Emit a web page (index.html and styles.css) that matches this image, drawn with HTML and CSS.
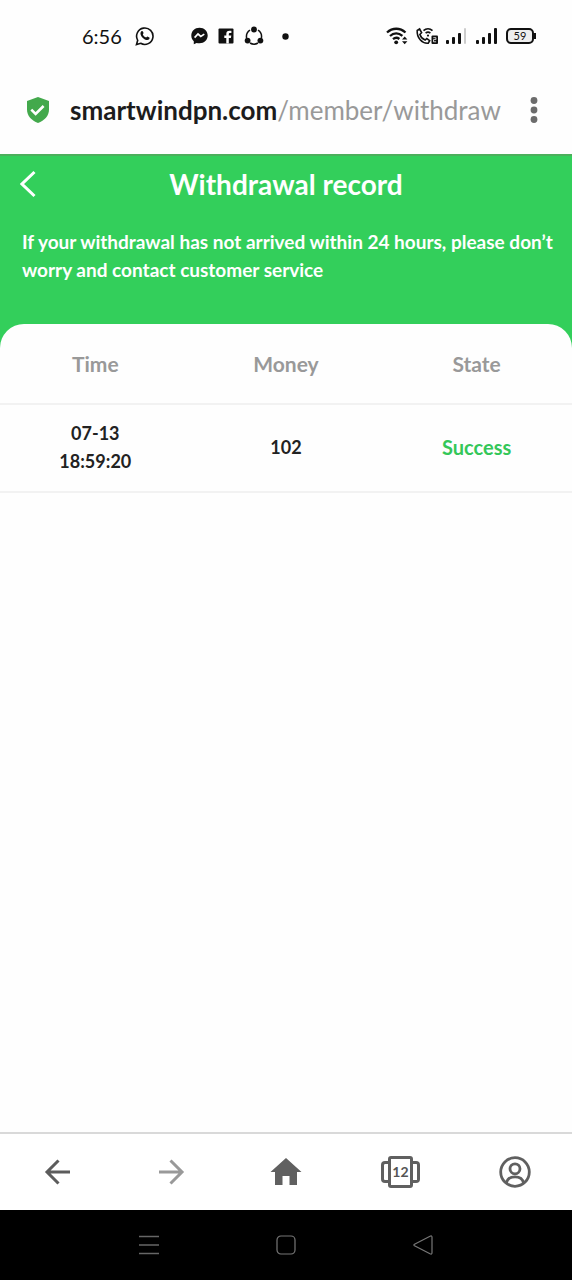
FILE: index.html
```html
<!DOCTYPE html>
<html lang="en">
<head>
<meta charset="utf-8">
<meta name="viewport" content="width=device-width, initial-scale=1">
<title>Withdrawal record</title>
<link rel="stylesheet" href="styles.css">
</head>
<body>
<div class="status">
  <div class="status-left">
    <time class="clock">6:56</time>
    <svg class="whatsapp" width="20" height="20" viewBox="0 0 20 20" fill="none" stroke="#111" stroke-width="1.6"><path d="M1.5 18.5l1.2-4.2a8.2 8.2 0 1 1 3 3z"/><path d="M6.2 5.4c.6-.7 1.400-.6 1.700.1l.7 1.600-.8 1.300c.7 1.500 1.800 2.500 3.300 3.200l1.300-1 1.900 1c.5.400.3 1.200-.2 1.700-1.400 1.300-3.600.6-5.600-.9-2.300-1.800-4.100-5-2.300-7z" fill="#111" stroke="none"/></svg>
    <svg width="17" height="18" viewBox="0 0 17 18"><path d="M8.500.8C3.800.8.300 4.100.300 8.600c0 2.400.9 4.300 2.500 5.600v3l2.800-1.300c.9.300 1.900.4 2.900.4 4.700 0 8.200-3.200 8.200-7.700S13.200.8 8.500.8z" fill="#111"/><path d="M3.600 10.600L7 7l2.800 2.400 3.500-2.300" fill="none" stroke="#fff" stroke-width="1.700"/></svg>
    <svg width="16" height="16" viewBox="0 0 16 16"><rect x=".5" y=".5" width="15" height="15" rx="1" fill="#111"/><path d="M10.800 15.500V9.900h2.100l.4-2.300h-2.500V6.200c0-.8.400-1.200 1.300-1.200h1.300V2.800h-1.900C9.300 2.800 8.300 4 8.300 6v1.600H6.300v2.300h2v5.600z" fill="#fff"/></svg>
    <svg width="20" height="20" viewBox="0 0 20 20" fill="none" stroke="#111" stroke-width="1.500"><path d="M6 4.200A7.600 7.600 0 0 0 2.600 12M14 4.200a7.600 7.600 0 0 1 3.400 7.800M6 17a8 8 0 0 0 8 0"/><g fill="#111" stroke="none"><circle cx="10" cy="3.500" r="2.900"/><circle cx="3.600" cy="14.600" r="2.900"/><circle cx="16.400" cy="14.600" r="2.900"/></g></svg>
    <svg class="dot" width="7" height="7" viewBox="0 0 7 7"><circle cx="3.500" cy="3.500" r="3.200" fill="#111"/></svg>
  </div>
  <div class="status-right">
    <svg width="22" height="18" viewBox="0 0 22 18" fill="none" stroke="#111" stroke-width="2.300"><path d="M1 5.500C6.500.5 14 .5 19.500 5.500M4 9c3.700-3.300 8.600-3.300 12.400-.2M7 12.200c2-1.700 4.500-1.700 6.400-.2"/><circle cx="10.200" cy="15.300" r="1.900" fill="#111" stroke="none"/><path d="M16 12.500l2.700-3 2.700 3zM16 14.200l2.700 3 2.700-3z" fill="#111" stroke="none"/></svg>
    <svg width="22" height="18" viewBox="0 0 22 18" fill="none" stroke="#111" stroke-width="1.600"><path d="M1.200 3.500L3.600 2l2 3.700-1.700 1.700c.9 2.700 2.700 4.600 5.200 5.600l1.700-1.500 2.900 2.200-1.500 2.500C6 16.800.7 10.500 1.200 3.500z"/><path d="M7.500 3.700c2.600-2.400 6.400-2.400 9 0M9.600 6.200c1.400-1.200 3.400-1.200 4.800 0"/><circle cx="12" cy="8.600" r="1.100" fill="#111" stroke="none"/><rect x="15.500" y="8.500" width="6.500" height="8.500" rx="1" fill="#111" stroke="none"/><path d="M17.300 10.700h2.600v1.900h-2.400v2.200h2.600" stroke="#fff" stroke-width=".8"/></svg>
    <svg width="22" height="18" viewBox="0 0 22 18" fill="#111"><rect x="0" y="13" width="3" height="4" rx="1"/><rect x="6" y="10" width="3" height="7" rx="1"/><rect x="12" y="6" width="3" height="11" rx="1"/><rect x="18" y="1" width="2" height="16" rx="1" fill="#ccc"/></svg>
    <svg width="22" height="18" viewBox="0 0 22 18" fill="#111"><rect x="0" y="13" width="3" height="4" rx="1"/><rect x="6" y="10" width="3" height="7" rx="1"/><rect x="12" y="6" width="3" height="11" rx="1"/><rect x="18" y="1" width="3" height="16" rx="1"/></svg>
    <div class="battery-group"><span class="battery">59</span><span class="battery-tip"></span></div>
  </div>
</div>
<div class="address">
  <svg class="shield" width="24" height="28" viewBox="0 0 24 28"><path d="M12 1l11 4v8.500c0 6.300-4.500 11-11 13.500C5.500 24.500 1 19.800 1 13.500V5z" fill="#43a94c"/><path d="M5.300 13.700l4.300 4.300 8-8" fill="none" stroke="#fff" stroke-width="2.600"/></svg>
  <div class="url"><strong>smartwindpn.com</strong>/member/withdraw</div>
  <button class="icon-button" aria-label="Menu"><svg width="8" height="28" viewBox="0 0 8 28" fill="#6c6c6c"><circle cx="4" cy="4.500" r="3.400"/><circle cx="4" cy="14" r="3.400"/><circle cx="4" cy="23.500" r="3.400"/></svg></button>
</div>
<header class="banner">
  <div class="title-row">
    <button class="icon-button" aria-label="Back"><svg width="18" height="28" viewBox="0 0 18 28" fill="none" stroke="#fff" stroke-width="3"><path d="M14.500 2L2 14l12.500 12"/></svg></button>
    <h1>Withdrawal record</h1>
  </div>
  <p>If your withdrawal has not arrived within 24 hours, please don’t worry and contact customer service</p>
</header>
<main class="sheet">
  <table>
    <thead><tr><th scope="col">Time</th><th scope="col">Money</th><th scope="col">State</th></tr></thead>
    <tbody><tr><td>07-13<br>18:59:20</td><td>102</td><td class="success">Success</td></tr></tbody>
  </table>
</main>
<nav class="toolbar" aria-label="Browser">
  <button class="icon-button" aria-label="Previous page"><svg width="28" height="28" viewBox="0 0 28 28" fill="none" stroke="#5c5c5c" stroke-width="3"><path d="M27 14H4M15.500 2.500L4 14l11.500 11.500"/></svg></button>
  <button class="icon-button" aria-label="Next page"><svg width="28" height="28" viewBox="0 0 28 28" fill="none" stroke="#999" stroke-width="3"><path d="M1 14h23M12.500 2.500L24 14 12.500 25.500"/></svg></button>
  <button class="icon-button" aria-label="Home"><svg width="32" height="28" viewBox="0 0 32 28"><path d="M16 0l15.500 14H27v13h-7.500v-9h-7v9H5V14H.5z" fill="#606060"/></svg></button>
  <button class="icon-button tabs" aria-label="12 tabs"><span class="tab-edge left"></span><span class="tab-count">12</span><span class="tab-edge right"></span></button>
  <button class="icon-button" aria-label="Account"><svg width="32" height="32" viewBox="0 0 32 32" fill="none" stroke="#606060" stroke-width="2.800"><circle cx="16" cy="16" r="14.300"/><circle cx="16" cy="12.800" r="5"/><path d="M7.500 27c.8-4.500 4.400-6.200 8.500-6.200s7.700 1.700 8.500 6.200"/></svg></button>
</nav>
<nav class="system" aria-label="System">
  <button class="icon-button" aria-label="Recent apps"><svg width="20" height="20" viewBox="0 0 20 20" stroke="#666" stroke-width="1.300"><path d="M0 1.500h20M0 10h20M0 18.500h20"/></svg></button>
  <button class="icon-button" aria-label="Home screen"><svg width="20" height="20" viewBox="0 0 20 20" fill="none" stroke="#777" stroke-width="1.200"><rect x="1" y="1" width="18" height="18" rx="4"/></svg></button>
  <button class="icon-button" aria-label="System back"><svg width="20" height="20" viewBox="0 0 20 20" fill="none" stroke="#777" stroke-width="1.200"><path d="M1.500 9.200L17 1.200q2-.8 2 1v15.600q0 1.800-2 1L1.500 10.800q-1.200-.8 0-1.600z"/></svg></button>
</nav>
</body>
</html>
```
FILE: styles.css
```css
* { box-sizing: border-box; }
body {
  margin: 0;
  min-height: 100vh;
  display: flex;
  flex-direction: column;
  background: #fefefe;
  color: #222;
  font-family: Lato, "Open Sans", sans-serif;
}
svg { display: block; flex: none; }
.icon-button {
  display: flex;
  align-items: center;
  justify-content: center;
  padding: 0;
  border: 0;
  background: none;
  color: inherit;
  font: inherit;
}
.status {
  height: 72px;
  padding: 0 36px 0 82px;
  display: flex;
  align-items: center;
  justify-content: space-between;
}
.status-left { display: flex; align-items: center; gap: 10px; }
.status-right { display: flex; align-items: center; gap: 8px; }
.clock { font-size: 20px; line-height: 24px; color: #111; }
.whatsapp { margin: 0 26px 0 3px; }
.dot { margin-left: 8px; }
.battery-group { display: flex; align-items: center; }
.battery {
  width: 28px;
  height: 16px;
  border: 2px solid #111;
  border-radius: 5px;
  background: #eee;
  color: #111;
  font-size: 11px;
  line-height: 12px;
  text-align: center;
}
.battery-tip { width: 2px; height: 6px; background: #111; }
.address {
  height: 82px;
  padding: 0 34px 6px 26px;
  display: flex;
  align-items: center;
}
.url {
  flex: 1;
  min-width: 0;
  margin: 0 12px 0 20px;
  overflow: hidden;
  white-space: nowrap;
  color: #999;
  font-size: 26px;
  line-height: 36px;
}
.url strong { color: #1c1c1c; font-weight: 700; }
.banner {
  padding: 0 8px 64px 20px;
  border-top: 2px solid #4caf5c;
  background: #33cf5b;
  color: #fff;
}
.title-row {
  display: grid;
  grid-template-columns: 18px 1fr 30px;
  align-items: center;
  height: 56px;
}
h1 {
  margin: 0;
  font-size: 28px;
  line-height: 36px;
  font-weight: 700;
  text-align: center;
}
.banner p {
  margin: 16px 0 0;
  padding-left: 2px;
  font-size: 19px;
  line-height: 28px;
  font-weight: 700;
}
.sheet {
  flex: 1;
  margin-top: -24px;
  border-radius: 24px 24px 0 0;
  background: #fefefe;
}
table {
  width: 100%;
  border-collapse: separate;
  border-spacing: 0;
  table-layout: fixed;
  font-size: 18px;
  line-height: 28px;
  text-align: center;
}
th, td { padding: 0; font-weight: 700; border-bottom: 2px solid #f2f2f2; }
th { height: 81px; color: #999; font-size: 21px; }
td { height: 88px; padding-bottom: 2px; }
.success { color: #34c759; font-size: 20px; }
.toolbar {
  height: 78px;
  border-top: 2px solid #d9d9d9;
  background: #fff;
  display: grid;
  grid-template-columns: repeat(5, 1fr);
}
.tab-edge { width: 7px; height: 22px; border: 3px solid #606060; }
.tab-edge.left { border-right: 0; border-radius: 4px 0 0 4px; }
.tab-edge.right { border-left: 0; border-radius: 0 4px 4px 0; }
.tab-count {
  width: 25px;
  height: 32px;
  border: 3px solid #606060;
  border-radius: 3px;
  color: #555;
  font-size: 14px;
  line-height: 26px;
  font-weight: 700;
}
.system {
  height: 70px;
  padding: 0 14%;
  background: #000;
  display: grid;
  grid-template-columns: repeat(3, 1fr);
}
```
